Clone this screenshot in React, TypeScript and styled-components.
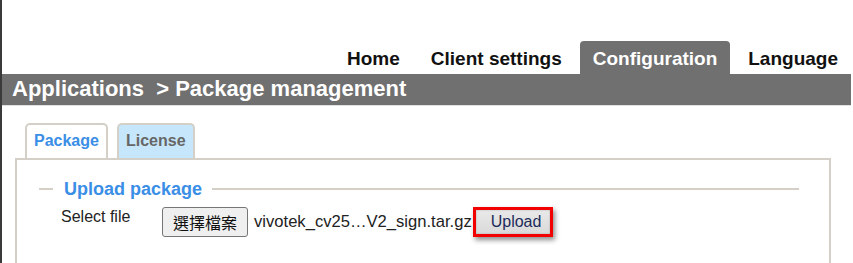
import React from "react";
import styled, { createGlobalStyle } from "styled-components";

const GlobalStyle = createGlobalStyle`
  html, body { margin: 0; padding: 0; background: #fff; }
  body { font-family: "Liberation Sans", Arial, sans-serif; }
  * { box-sizing: border-box; }
`;

const Page = styled.div`
  width: 853px;
  height: 263px;
  overflow: hidden;
  border-left: 2px solid #3a3a3a;
  background: #fff;
`;

const Header = styled.header`
  padding-top: 41px;
`;

const Nav = styled.nav`
  display: flex;
  justify-content: flex-end;
  gap: 5px;
  padding-right: 2px;
  height: 33px;
`;

const NavTab = styled.a<{ $active?: boolean }>`
  display: flex;
  align-items: center;
  padding: 2px 13px 0;
  border-radius: 4px 4px 0 0;
  font-size: 19px;
  font-weight: bold;
  color: ${(p) => (p.$active ? "#fff" : "#111")};
  background: ${(p) => (p.$active ? "#707070" : "transparent")};
  text-decoration: none;
  white-space: nowrap;
`;

const Breadcrumb = styled.div`
  height: 32px;
  margin-right: 2px;
  background: #707070;
  display: flex;
  align-items: center;
  padding: 0 0 2px 10px;
  color: #fff;
  font-size: 22px;
  font-weight: bold;
  white-space: pre;
  border-bottom: 1px solid #e2e2e2;
`;

const Content = styled.main`
  padding: 17px 22px 0 13px;
`;

const SubTabs = styled.div`
  display: flex;
  gap: 9px;
  padding-left: 10px;
`;

const SubTab = styled.div<{ $active?: boolean }>`
  height: 35px;
  padding: 0 7px 2px 7px;
  display: flex;
  align-items: center;
  border: 2px solid #d4d0c8;
  border-bottom: none;
  border-radius: 5px 5px 0 0;
  background: ${(p) => (p.$active ? "#fff" : "#c6e7fb")};
  color: ${(p) => (p.$active ? "#3a8ee6" : "#666")};
  font-size: 16px;
  font-weight: bold;
`;

const Panel = styled.section`
  border: 2px solid #d4d0c8;
  height: 140px;
  padding: 18px 30px 0 22px;
`;

const LegendRow = styled.div`
  display: flex;
  align-items: center;
  height: 22px;
  &::before,
  &::after {
    content: "";
    height: 2px;
    background: #d4d0c8;
  }
  &::before {
    width: 14px;
  }
  &::after {
    flex: 1;
  }
`;

const LegendText = styled.span`
  margin: 0 10px 0 11px;
  font-size: 18px;
  font-weight: bold;
  color: #3a8ee6;
`;

const FileRow = styled.div`
  display: flex;
  align-items: flex-start;
  margin-top: 7px;
  padding-left: 22px;
`;

const Label = styled.span`
  width: 101px;
  margin-top: 1px;
  font-size: 16px;
  line-height: 18px;
  color: #222;
`;

const Controls = styled.div`
  display: flex;
  align-items: center;
  height: 30px;
`;

const ChooseButton = styled.button`
  height: 30px;
  padding: 0 10px;
  border: 1px solid #767676;
  border-radius: 3px;
  background: #efefef;
  font-family: "Noto Sans CJK TC", "Liberation Sans", sans-serif;
  font-size: 16px;
  color: #111;
`;

const FileName = styled.span`
  margin-left: 6px;
  font-size: 16.6px;
  color: #222;
  white-space: nowrap;
`;

const UploadFrame = styled.div`
  margin-left: 1px;
  height: 30px;
  border: 3px solid #f20000;
  box-shadow: 2px 3px 5px rgba(0, 0, 0, 0.45);
  display: flex;
`;

const UploadButton = styled.button`
  height: 24px;
  padding: 0 9px 0 15px;
  border: none;
  background: linear-gradient(#e9e9e9, #d9d9d9);
  box-shadow: inset 0 0 2px rgba(0, 0, 0, 0.25);
  font-family: "Liberation Sans", Arial, sans-serif;
  font-size: 16px;
  color: #1c2b5a;
`;

export default function App() {
  return (
    <>
      <GlobalStyle />
      <Page>
        <Header>
          <Nav>
            <NavTab>Home</NavTab>
            <NavTab>Client settings</NavTab>
            <NavTab $active>Configuration</NavTab>
            <NavTab>Language</NavTab>
          </Nav>
          <Breadcrumb>{"Applications  > Package management"}</Breadcrumb>
        </Header>
        <Content>
          <SubTabs>
            <SubTab $active>Package</SubTab>
            <SubTab>License</SubTab>
          </SubTabs>
          <Panel>
            <LegendRow>
              <LegendText>Upload package</LegendText>
            </LegendRow>
            <FileRow>
              <Label>Select file</Label>
              <Controls>
                <ChooseButton>選擇檔案</ChooseButton>
                <FileName>vivotek_cv25…V2_sign.tar.gz</FileName>
                <UploadFrame>
                  <UploadButton>Upload</UploadButton>
                </UploadFrame>
              </Controls>
            </FileRow>
          </Panel>
        </Content>
      </Page>
    </>
  );
}
